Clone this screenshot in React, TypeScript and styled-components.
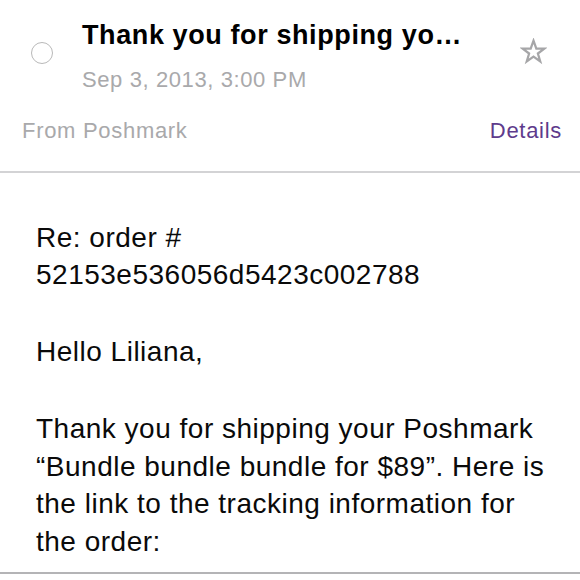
import React from "react";
import styled, { createGlobalStyle } from "styled-components";

const Global = createGlobalStyle`
  html, body { margin: 0; padding: 0; background: #ffffff; }
  body { font-family: "Liberation Sans", Arial, Helvetica, sans-serif; -webkit-font-smoothing: antialiased; }
`;

const Page = styled.div`
  width: 580px;
  height: 580px;
  overflow: hidden;
  background: #fff;
  display: flex;
  flex-direction: column;
  padding-bottom: 6px;
  box-sizing: border-box;
`;

const Header = styled.header`
  display: grid;
  grid-template-columns: 82px 1fr 58px;
  align-items: start;
  padding-top: 19px;
`;

const Radio = styled.span`
  width: 22px;
  height: 22px;
  border: 1.5px solid #b9b9b9;
  border-radius: 50%;
  margin: 23px 0 0 31px;
  box-sizing: border-box;
`;

const TitleBlock = styled.div`
  display: flex;
  flex-direction: column;
  min-width: 0;
`;

const Title = styled.h1`
  margin: 0;
  font-size: 27px;
  letter-spacing: 0.6px;
  font-weight: 700;
  color: #000;
  line-height: 32px;
  white-space: nowrap;
`;

const DateLine = styled.div`
  font-size: 22px;
  letter-spacing: 0.6px;
  color: #a9a9ab;
  line-height: 28px;
  margin-top: 14.5px;
`;

const StarBox = styled.span`
  display: flex;
  justify-content: center;
  margin: 19px 0 0 -19px;
  width: 60px;
`;

const FromRow = styled.div`
  display: flex;
  justify-content: space-between;
  align-items: baseline;
  padding: 0 18px 0 22px;
  margin-top: 23px;
  font-size: 22px;
  letter-spacing: 0.7px;
  line-height: 28px;
`;

const From = styled.span`
  color: #a9a9ab;
`;

const Details = styled.span`
  color: #5e3b8c;
`;

const Spacer = styled.div<{ $h: number }>`
  height: ${(p) => p.$h}px;
  flex-shrink: 0;
`;

const Divider = styled.hr<{ $color: string; $thick: number }>`
  margin: 0;
  border: none;
  height: ${(p) => p.$thick}px;
  background: ${(p) => p.$color};
  flex-shrink: 0;
`;

const Body = styled.div`
  flex: 1;
  min-height: 0;
  padding: 45.5px 18px 0 36px;
  box-sizing: border-box;
  overflow: hidden;
  font-size: 28px;
  letter-spacing: 0.5px;
  line-height: 37.5px;
  color: #0a0a0a;
`;

const Para = styled.p`
  margin: 0 0 39.5px 0;
`;

const Star = () => (
  <svg width="27" height="27" viewBox="0 0 24 24">
    <path
      d="M12 2.4 L14.5 9.4 L21.6 9.5 L15.9 13.8 L18 20.8 L12 16.6 L6 20.8 L8.1 13.8 L2.4 9.5 L9.5 9.4 Z"
      fill="none"
      stroke="#a6a6a8"
      strokeWidth="2"
      strokeLinejoin="miter"
    />
  </svg>
);

export default function App() {
  return (
    <Page>
      <Global />
      <Header>
        <Radio />
        <TitleBlock>
          <Title>Thank you for shipping yo…</Title>
          <DateLine>Sep 3, 2013, 3:00 PM</DateLine>
        </TitleBlock>
        <StarBox>
          <Star />
        </StarBox>
      </Header>
      <FromRow>
        <From>From Poshmark</From>
        <Details>Details</Details>
      </FromRow>
      <Spacer $h={26.5} />
      <Divider $color="#d3d3d5" $thick={2} />
      <Body>
        <Para>
          Re: order #<br />
          52153e536056d5423c002788
        </Para>
        <Para>Hello Liliana,</Para>
        <Para>
          Thank you for shipping your Poshmark “Bundle bundle bundle for $89”. Here is
          the link to the tracking information for the order:
        </Para>
      </Body>
      <Divider $color="#b4b4b6" $thick={2} />
    </Page>
  );
}
